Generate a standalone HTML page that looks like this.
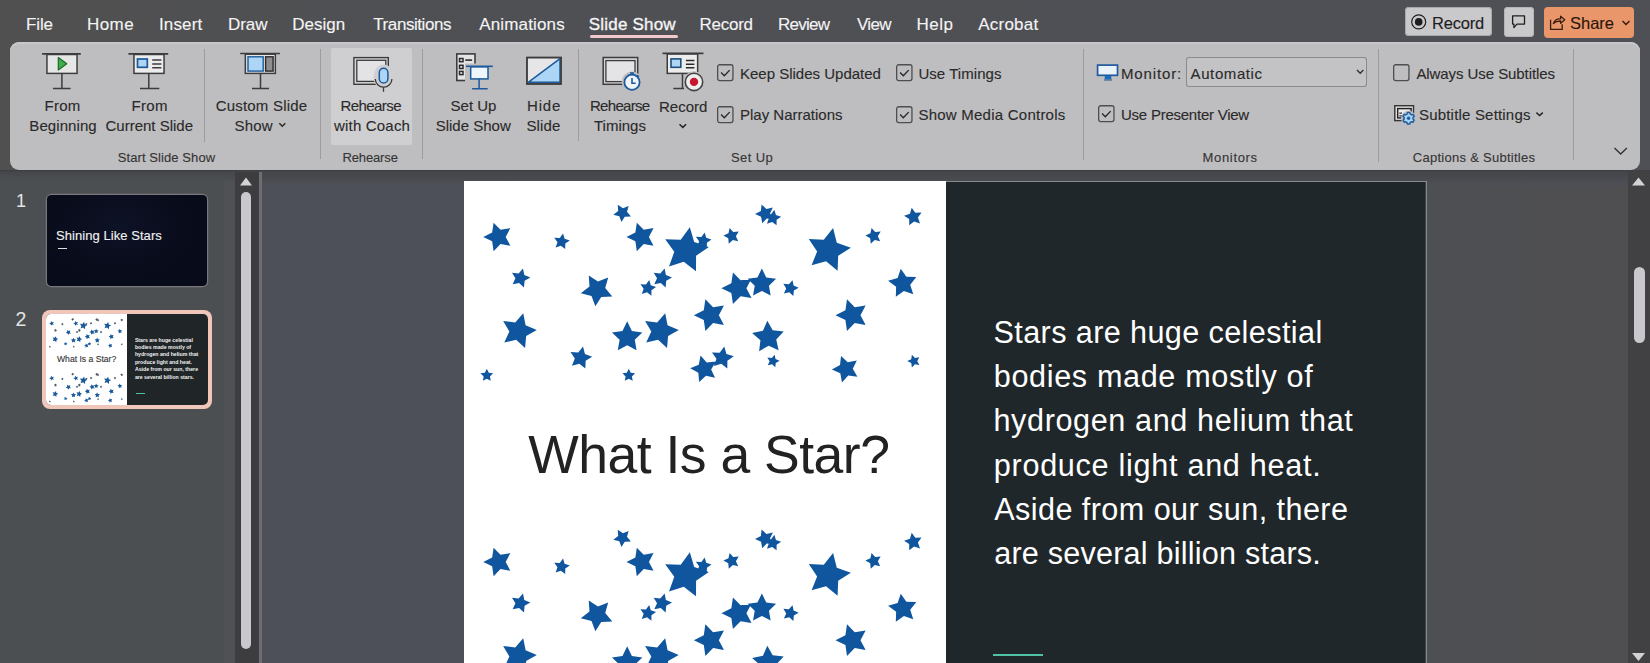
<!DOCTYPE html>
<html><head><meta charset="utf-8"><style>
html,body{margin:0;padding:0;width:1650px;height:663px;overflow:hidden;background:linear-gradient(90deg,#505050 0px,#4f5054 420px,#4f5055 1650px);font-family:"Liberation Sans", sans-serif;}
.t{position:absolute;white-space:nowrap;line-height:1;-webkit-text-stroke:0.12px currentColor;}
</style></head><body>
<div class="t" style="left:26.0px;top:15.6px;font-size:17px;color:#f4f4f4;letter-spacing:-0.13px;">File</div>
<div class="t" style="left:87.0px;top:15.6px;font-size:17px;color:#f4f4f4;letter-spacing:0.43px;">Home</div>
<div class="t" style="left:159.0px;top:15.6px;font-size:17px;color:#f4f4f4;letter-spacing:0.14px;">Insert</div>
<div class="t" style="left:227.9px;top:15.6px;font-size:17px;color:#f4f4f4;">Draw</div>
<div class="t" style="left:292.3px;top:15.6px;font-size:17px;color:#f4f4f4;">Design</div>
<div class="t" style="left:373.3px;top:15.6px;font-size:17px;color:#f4f4f4;letter-spacing:-0.43px;">Transitions</div>
<div class="t" style="left:479.3px;top:15.6px;font-size:17px;color:#f4f4f4;letter-spacing:0.14px;">Animations</div>
<div class="t" style="left:588.8px;top:15.6px;font-size:17px;color:#f4f4f4;-webkit-text-stroke:0.35px #f4f4f4;letter-spacing:0.20px;">Slide Show</div>
<div class="t" style="left:699.6px;top:15.6px;font-size:17px;color:#f4f4f4;letter-spacing:-0.28px;">Record</div>
<div class="t" style="left:778.0px;top:15.6px;font-size:17px;color:#f4f4f4;letter-spacing:-0.74px;">Review</div>
<div class="t" style="left:857.0px;top:15.6px;font-size:17px;color:#f4f4f4;letter-spacing:-0.67px;">View</div>
<div class="t" style="left:916.6px;top:15.6px;font-size:17px;color:#f4f4f4;letter-spacing:0.47px;">Help</div>
<div class="t" style="left:978.2px;top:15.6px;font-size:17px;color:#f4f4f4;letter-spacing:0.23px;">Acrobat</div>
<div style="position:absolute;left:589.5px;top:34.5px;width:88px;height:3px;border-radius:2px;background:#efc9cc"></div>
<div style="position:absolute;left:1405.3px;top:7.3px;width:87px;height:29px;border-radius:4px;background:#c9c9cb;box-shadow:inset 0 0 0 1px #a9a9ac"></div>
<svg style="position:absolute;left:1410px;top:13px" width="18" height="18"><circle cx="8.7" cy="8.9" r="7" fill="none" stroke="#1e1e1e" stroke-width="1.15"/><circle cx="8.7" cy="8.9" r="3.8" fill="#1e1e1e"/></svg>
<div class="t" style="left:1432.0px;top:14.9px;font-size:16.5px;color:#1e1e1e;letter-spacing:-0.20px;">Record</div>
<div style="position:absolute;left:1503.5px;top:7px;width:30px;height:30px;border-radius:4px;background:#c9c9cb;box-shadow:inset 0 0 0 1px #b5b5b8"></div>
<svg style="position:absolute;left:1505px;top:8px" width="30" height="28"><path d="M7.6 7.9 H19.5 V16.1 H11.9 L8.9 19.6 V16.1 H7.6 Z" fill="none" stroke="#1e1e1e" stroke-width="1.3" stroke-linejoin="round"/></svg>
<div style="position:absolute;left:1544px;top:6.5px;width:90px;height:31px;border-radius:4px;background:#e9966b"></div>
<svg style="position:absolute;left:1505px;top:8px" width="65" height="28"><path d="M45.6 11.8 V21.3 H57.2 V16.2" fill="none" stroke="#3a1e0e" stroke-width="1.3"/><path d="M48.3 15.6 C49.5 12.3 52 10.6 55.6 10.9 L55.6 8.2 L59.8 11.7 L55.6 15.3 L55.6 13 C52.6 12.9 50.3 13.7 48.3 15.6 Z" fill="none" stroke="#3a1e0e" stroke-width="1.3" stroke-linejoin="round"/></svg>
<div class="t" style="left:1570.0px;top:14.9px;font-size:16.5px;color:#2a170c;">Share</div>
<svg style="position:absolute;left:1620px;top:18px" width="12" height="10"><path d="M2.5 3 L6 6.5 L9.5 3" fill="none" stroke="#2e1a10" stroke-width="1.4"/></svg>
<div style="position:absolute;left:10px;top:42px;width:1630px;height:128px;border-radius:9px;background:#bebdbf;box-shadow:inset 0 2px 0 #c9c7cb"></div>
<div style="position:absolute;left:204.0px;top:49px;width:1.3px;height:93px;background:#9c9b9e"></div>
<div style="position:absolute;left:320.0px;top:49px;width:1.3px;height:110px;background:#9c9b9e"></div>
<div style="position:absolute;left:422.0px;top:49px;width:1.3px;height:110px;background:#9c9b9e"></div>
<div style="position:absolute;left:578.0px;top:49px;width:1.3px;height:92px;background:#9c9b9e"></div>
<div style="position:absolute;left:1083.0px;top:49px;width:1.3px;height:111px;background:#9c9b9e"></div>
<div style="position:absolute;left:1377.5px;top:49px;width:1.3px;height:113px;background:#9c9b9e"></div>
<div style="position:absolute;left:1572.5px;top:49px;width:1.3px;height:111px;background:#9c9b9e"></div>
<div style="position:absolute;left:331px;top:48px;width:81px;height:97px;background:#cfced1;border-radius:2px"></div>
<div class="t" style="left:117.8px;top:151.0px;font-size:13px;color:#353535;letter-spacing:0.08px;">Start Slide Show</div>
<div class="t" style="left:342.5px;top:151.0px;font-size:13px;color:#353535;letter-spacing:-0.14px;">Rehearse</div>
<div class="t" style="left:731.0px;top:151.3px;font-size:13px;color:#353535;letter-spacing:0.40px;">Set Up</div>
<div class="t" style="left:1202.6px;top:151.2px;font-size:13px;color:#353535;letter-spacing:0.66px;">Monitors</div>
<div class="t" style="left:1412.8px;top:151.2px;font-size:13px;color:#353535;letter-spacing:0.27px;">Captions &amp; Subtitles</div>
<div class="t" style="left:44.5px;top:97.9px;font-size:15px;color:#2a2a2a;letter-spacing:0.27px;">From</div>
<div class="t" style="left:29.3px;top:118.3px;font-size:15px;color:#2a2a2a;letter-spacing:0.08px;">Beginning</div>
<div class="t" style="left:131.4px;top:97.9px;font-size:15px;color:#2a2a2a;letter-spacing:0.40px;">From</div>
<div class="t" style="left:105.5px;top:118.3px;font-size:15px;color:#2a2a2a;">Current Slide</div>
<div class="t" style="left:215.7px;top:97.9px;font-size:15px;color:#2a2a2a;letter-spacing:0.20px;">Custom Slide</div>
<div class="t" style="left:234.6px;top:118.3px;font-size:15px;color:#2a2a2a;letter-spacing:0.13px;">Show</div>
<svg style="position:absolute;left:277px;top:120px" width="12" height="10"><path d="M2.3 3.3 L5.3 6.3 L8.3 3.3" fill="none" stroke="#2a2a2a" stroke-width="1.5"/></svg>
<div class="t" style="left:340.5px;top:97.9px;font-size:15px;color:#2a2a2a;letter-spacing:-0.57px;">Rehearse</div>
<div class="t" style="left:334.0px;top:118.3px;font-size:15px;color:#2a2a2a;letter-spacing:0.19px;">with Coach</div>
<div class="t" style="left:450.6px;top:97.9px;font-size:15px;color:#2a2a2a;">Set Up</div>
<div class="t" style="left:435.7px;top:118.3px;font-size:15px;color:#2a2a2a;">Slide Show</div>
<div class="t" style="left:527.0px;top:97.9px;font-size:15px;color:#2a2a2a;letter-spacing:0.83px;">Hide</div>
<div class="t" style="left:526.5px;top:118.3px;font-size:15px;color:#2a2a2a;letter-spacing:0.12px;">Slide</div>
<div class="t" style="left:590.0px;top:97.9px;font-size:15px;color:#2a2a2a;letter-spacing:-0.71px;">Rehearse</div>
<div class="t" style="left:594.0px;top:118.3px;font-size:15px;color:#2a2a2a;">Timings</div>
<div class="t" style="left:659.0px;top:98.8px;font-size:15px;color:#2a2a2a;">Record</div>
<svg style="position:absolute;left:676.7px;top:121px" width="12" height="10"><path d="M2.5 3.2 L5.8 6.4 L9.1 3.2" fill="none" stroke="#262626" stroke-width="1.5"/></svg>
<svg style="position:absolute;left:716px;top:64px" width="18" height="18"><rect x="1.65" y="0.75" width="15.3" height="15.8" rx="2" fill="none" stroke="#4e4e4e" stroke-width="1.3"/><path d="M5.1 8.6 L8.3 11.7 L13.7 6.1" fill="none" stroke="#262626" stroke-width="1.35"/></svg>
<div class="t" style="left:740.0px;top:66.1px;font-size:15px;color:#2a2a2a;">Keep Slides Updated</div>
<svg style="position:absolute;left:716px;top:105.5px" width="18" height="18"><rect x="1.65" y="0.75" width="15.3" height="15.8" rx="2" fill="none" stroke="#4e4e4e" stroke-width="1.3"/><path d="M5.1 8.6 L8.3 11.7 L13.7 6.1" fill="none" stroke="#262626" stroke-width="1.35"/></svg>
<div class="t" style="left:740.0px;top:107.3px;font-size:15px;color:#2a2a2a;">Play Narrations</div>
<svg style="position:absolute;left:895px;top:64px" width="18" height="18"><rect x="1.65" y="0.75" width="15.3" height="15.8" rx="2" fill="none" stroke="#4e4e4e" stroke-width="1.3"/><path d="M5.1 8.6 L8.3 11.7 L13.7 6.1" fill="none" stroke="#262626" stroke-width="1.35"/></svg>
<div class="t" style="left:918.4px;top:66.1px;font-size:15px;color:#2a2a2a;letter-spacing:0.06px;">Use Timings</div>
<svg style="position:absolute;left:895px;top:105.5px" width="18" height="18"><rect x="1.65" y="0.75" width="15.3" height="15.8" rx="2" fill="none" stroke="#4e4e4e" stroke-width="1.3"/><path d="M5.1 8.6 L8.3 11.7 L13.7 6.1" fill="none" stroke="#262626" stroke-width="1.35"/></svg>
<div class="t" style="left:918.4px;top:107.3px;font-size:15px;color:#2a2a2a;letter-spacing:0.24px;">Show Media Controls</div>
<svg style="position:absolute;left:1097px;top:105px" width="18" height="18"><rect x="1.65" y="0.75" width="15.3" height="15.8" rx="2" fill="none" stroke="#4e4e4e" stroke-width="1.3"/><path d="M5.1 8.6 L8.3 11.7 L13.7 6.1" fill="none" stroke="#262626" stroke-width="1.35"/></svg>
<div class="t" style="left:1121.0px;top:106.7px;font-size:15px;color:#2a2a2a;letter-spacing:-0.24px;">Use Presenter View</div>
<svg style="position:absolute;left:1391.5px;top:64px" width="18" height="18"><rect x="1.65" y="0.75" width="15.3" height="15.8" rx="2" fill="none" stroke="#4e4e4e" stroke-width="1.3"/></svg>
<div class="t" style="left:1416.4px;top:66.0px;font-size:15px;color:#2a2a2a;letter-spacing:-0.07px;">Always Use Subtitles</div>
<svg style="position:absolute;left:1090px;top:58px" width="40" height="30"><rect x="7.6" y="7.1" width="19.9" height="10.2" fill="#eaf2fa" stroke="#1f5a9e" stroke-width="1.7"/><rect x="14.7" y="18" width="6.6" height="3.3" fill="#1a6cc0"/><path d="M14 22 H22" stroke="#1a4a80" stroke-width="0.9"/></svg>
<div class="t" style="left:1121.0px;top:66.0px;font-size:15px;color:#2a2a2a;letter-spacing:0.86px;">Monitor:</div>
<div style="position:absolute;left:1186px;top:57px;width:181px;height:30px;border-radius:3px;background:#c3c2c4;box-shadow:inset 0 0 0 1px #8a898c"></div>
<div class="t" style="left:1190.6px;top:65.6px;font-size:15px;color:#2a2a2a;letter-spacing:0.59px;">Automatic</div>
<svg style="position:absolute;left:1354px;top:67px" width="12" height="10"><path d="M3 3 L6.2 6.2 L9.4 3" fill="none" stroke="#333" stroke-width="1.4"/></svg>
<svg style="position:absolute;left:1388px;top:100px" width="40" height="30"><rect x="6.8" y="5.7" width="18.7" height="14.9" fill="#dcdcdc" stroke="#333" stroke-width="1.4"/><rect x="9.7" y="8.6" width="13.4" height="9.3" fill="#ececec" stroke="#222" stroke-width="1.4"/><path d="M11.3 13.1 H14 M11.3 15.8 H14" stroke="#333" stroke-width="1.2"/><circle cx="20.6" cy="18.3" r="7.6" fill="#bebdbf"/><path d="M25.04,19.00 L26.18,20.22 L25.05,22.17 L23.43,21.80 L22.21,22.50 L21.73,24.09 L19.47,24.09 L18.99,22.50 L17.77,21.80 L16.15,22.17 L15.02,20.22 L16.16,19.00 L16.16,17.60 L15.02,16.38 L16.15,14.43 L17.77,14.80 L18.99,14.10 L19.47,12.51 L21.73,12.51 L22.21,14.10 L23.43,14.80 L25.05,14.43 L26.18,16.38 L25.04,17.60Z" fill="#a9d4f5" stroke="#1f5fa0" stroke-width="1.5" stroke-linejoin="round"/><circle cx="20.6" cy="18.3" r="1.7" fill="#1f5fa0"/></svg>
<div class="t" style="left:1419.0px;top:106.7px;font-size:15px;color:#2a2a2a;letter-spacing:0.19px;">Subtitle Settings</div>
<svg style="position:absolute;left:1534px;top:110px" width="12" height="10"><path d="M2.4 2.6 L5.6 5.6 L8.8 2.6" fill="none" stroke="#262626" stroke-width="1.45"/></svg>
<svg style="position:absolute;left:1612px;top:145px" width="18" height="12"><path d="M2.5 3 L8.7 9 L14.9 3" fill="none" stroke="#333" stroke-width="1.4"/></svg>
<svg style="position:absolute;left:36px;top:48px" width="60" height="45" viewBox="0 0 60 45">
<rect x="10.95" y="6.5" width="30.1" height="18.9" fill="#e6e6e6" stroke="#3c3c3c" stroke-width="1.5"/>
<path d="M6.1 5.9 H44.8" stroke="#3c3c3c" stroke-width="1.6"/>
<path d="M25.9 26 V40.2 M17 40.4 H34.6" stroke="#3c3c3c" stroke-width="1.5"/>
<path d="M22.3 9.6 L30.8 15.8 L22.3 22 Z" fill="#3fae4f" stroke="#1e6a2a" stroke-width="1.2" stroke-linejoin="round"/>
</svg>
<svg style="position:absolute;left:122px;top:48px" width="60" height="45" viewBox="0 0 60 45">
<rect x="11.95" y="6.5" width="30.1" height="18.9" fill="#ececec" stroke="#3c3c3c" stroke-width="1.5"/>
<path d="M6.4 5.9 H46.2" stroke="#3c3c3c" stroke-width="1.6"/>
<path d="M26.8 26 V40.2 M18 40.4 H37.3" stroke="#3c3c3c" stroke-width="1.5"/>
<rect x="15.5" y="11" width="9.8" height="8.3" fill="#acd5f6" stroke="#1d5a9c" stroke-width="1.7"/>
<path d="M30.2 12.1 H39.4 M30.2 16 H39.4 M30.2 19.8 H39.4" stroke="#3c3c3c" stroke-width="1.5"/>
</svg>
<svg style="position:absolute;left:231px;top:48px" width="60" height="45" viewBox="0 0 60 45">
<rect x="14.35" y="6.2" width="30" height="19.2" fill="#e6e6e6" stroke="#3c3c3c" stroke-width="1.5"/>
<path d="M9.2 5.5 H48.9" stroke="#3c3c3c" stroke-width="1.6"/>
<path d="M29.5 26 V40.4 M21 40.6 H38" stroke="#3c3c3c" stroke-width="1.5"/>
<rect x="17" y="8.8" width="15.2" height="14.3" fill="#acd5f6" stroke="#1d5a9c" stroke-width="1.4"/>
<rect x="34.6" y="8.8" width="7.5" height="14.3" fill="#8f8f8f" stroke="#2a2a2a" stroke-width="1.4"/>
</svg>
<svg style="position:absolute;left:340px;top:48px" width="70" height="50" viewBox="0 0 70 50">
<rect x="13.9" y="9.6" width="34.4" height="26.7" fill="#d6d6d8" stroke="#3c3c3c" stroke-width="1.4"/>
<rect x="16.8" y="12.3" width="29" height="21.1" fill="#e3e3e5" stroke="#3c3c3c" stroke-width="1.3"/>
<ellipse cx="43.6" cy="29" rx="10" ry="12.5" fill="#cfced1"/>
<path d="M35.3 30.9 A8.3 8.3 0 0 0 51.9 30.9" fill="none" stroke="#3c3c3c" stroke-width="1.3"/>
<rect x="39.3" y="20.2" width="8.6" height="14.8" rx="4.3" fill="#acd5f6" stroke="#1d5a9c" stroke-width="1.5"/>
<path d="M43.5 39.2 V43.8" stroke="#3c3c3c" stroke-width="1.3"/>
</svg>
<svg style="position:absolute;left:448px;top:48px" width="60" height="45" viewBox="0 0 60 45">
<rect x="8.8" y="5.9" width="18.2" height="26.6" fill="#e4e4e4" stroke="#3c3c3c" stroke-width="1.6"/>
<rect x="11.5" y="10.5" width="3.5" height="3.2" fill="#e4e4e4" stroke="#2a2a2a" stroke-width="1.5"/>
<rect x="11.5" y="17.3" width="3.5" height="3.2" fill="#e4e4e4" stroke="#2a2a2a" stroke-width="1.5"/>
<rect x="11.5" y="23.4" width="3.5" height="3.2" fill="#e4e4e4" stroke="#2a2a2a" stroke-width="1.5"/>
<path d="M17.3 12.1 H24.1" stroke="#2a2a2a" stroke-width="1.6"/>
<rect x="17" y="15.5" width="28" height="26" fill="#bebdbf"/>
<path d="M18 18.3 H44.8" stroke="#1d5a9c" stroke-width="1.6"/>
<rect x="22.7" y="18.9" width="17.3" height="12" fill="#eef5fb" stroke="#1d5a9c" stroke-width="1.5"/>
<path d="M31.1 31 V40.5 M24.1 40.7 H39.7" stroke="#1d5a9c" stroke-width="1.5"/>
</svg>
<svg style="position:absolute;left:515px;top:48px" width="60" height="45" viewBox="0 0 60 45">
<rect x="11.95" y="9.55" width="34.1" height="26.4" fill="#e6e6e8" stroke="#3c3c3c" stroke-width="1.5"/>
<path d="M13.2 34.3 L45 10.6 V34.3 Z" fill="#acd5f6" stroke="#1d5a9c" stroke-width="1.5" stroke-linejoin="round"/>
<rect x="11.95" y="9.55" width="34.1" height="26.4" fill="none" stroke="#3c3c3c" stroke-width="1.5"/>
</svg>
<svg style="position:absolute;left:595px;top:48px" width="60" height="45" viewBox="0 0 60 45">
<rect x="8.2" y="9.5" width="34.5" height="26.8" fill="#d6d6d8" stroke="#3c3c3c" stroke-width="1.5"/>
<rect x="10.9" y="12.6" width="29.1" height="21" fill="#e4e4e6" stroke="#3c3c3c" stroke-width="1.3"/>
<circle cx="37" cy="33.8" r="10.3" fill="#bebdbf"/>
<circle cx="37" cy="34.3" r="7.6" fill="#eef4fa" stroke="#1d5a9c" stroke-width="1.8"/>
<path d="M35 25 H39 M37 25 V26.7 M42.3 27.2 L43.8 28.7" stroke="#1d5a9c" stroke-width="1.6"/>
<path d="M37 30 V35.2 H40.7" fill="none" stroke="#1d5a9c" stroke-width="1.6"/>
</svg>
<svg style="position:absolute;left:655px;top:48px" width="60" height="45" viewBox="0 0 60 45">
<rect x="12.25" y="6" width="30.4" height="19.4" fill="#ececec" stroke="#3c3c3c" stroke-width="1.5"/>
<path d="M7.5 5.4 H48.5" stroke="#3c3c3c" stroke-width="1.6"/>
<path d="M27.5 26 V40.2 M18.3 40.4 H29" stroke="#3c3c3c" stroke-width="1.5"/>
<rect x="16" y="10.9" width="9.8" height="8.4" fill="#acd5f6" stroke="#1f4f7a" stroke-width="1.6"/>
<path d="M30.9 12.4 H39.4 M30.9 16.2 H39.4 M30.9 19.8 H39.4" stroke="#2a2a2a" stroke-width="1.5"/>
<circle cx="39" cy="33.9" r="10.6" fill="#bebdbf"/>
<circle cx="39" cy="33.9" r="8.7" fill="#eeeeee" stroke="#444" stroke-width="1.6"/>
<circle cx="39" cy="33.9" r="4.2" fill="#c8172c"/>
</svg>
<div style="position:absolute;left:0;top:170px;width:1650px;height:16px;background:linear-gradient(#3d3d41 0px,#45464a 2px,#4a4b50 10px,#4e5157 16px)"></div>
<div style="position:absolute;left:0;top:172px;width:236px;height:491px;background:linear-gradient(#46474a 0px,#4c4f52 9px,#4c4f52 100%)"></div>
<div style="position:absolute;left:224px;top:181px;width:11px;height:482px;background:#505155"></div>
<div style="position:absolute;left:235px;top:172px;width:24px;height:491px;background:#3d3d40"></div>
<div style="position:absolute;left:259px;top:172px;width:2.5px;height:491px;background:#6c6e72"></div>
<svg style="position:absolute;left:239px;top:176px" width="14" height="10"><path d="M1 9.5 L7 1.5 L13 9.5 Z" fill="#d2d2d4"/></svg>
<div style="position:absolute;left:240.5px;top:192px;width:10.5px;height:457px;border-radius:5.5px;background:#c9c8cd"></div>
<div style="position:absolute;left:261.5px;top:186px;width:1366px;height:477px;background:linear-gradient(90deg,#4d5058 0px,#4d5059 200px,#4e4f53 1160px,#4f4f51 1366px)"></div>
<div style="position:absolute;left:1628px;top:170px;width:22px;height:493px;background:#414143"></div>
<svg style="position:absolute;left:1631px;top:176px" width="15" height="10"><path d="M1 9.5 L7.5 1.5 L14 9.5 Z" fill="#d2d2d4"/></svg>
<div style="position:absolute;left:1633.5px;top:267px;width:11px;height:76px;border-radius:6px;background:#c9c8cd"></div>
<svg style="position:absolute;left:1631px;top:652px" width="15" height="10"><path d="M1 1 L7.5 9 L14 1 Z" fill="#d2d2d4"/></svg>
<div class="t" style="left:16.0px;top:192.3px;font-size:18px;color:#e4e4e4;-webkit-text-stroke:0;">1</div>
<div style="position:absolute;left:46.7px;top:195.3px;width:160.5px;height:91px;border-radius:4.5px;background:radial-gradient(ellipse 60% 70% at 45% 35%,#0e1226,#080b19 80%);box-shadow:0 0 0 1.2px #77787e"></div>
<div class="t" style="left:56.0px;top:229.0px;font-size:13px;color:#f0f0f0;letter-spacing:0.06px;">Shining Like Stars</div>
<div style="position:absolute;left:57.5px;top:247.5px;width:9px;height:1.3px;background:#ddd"></div>
<div class="t" style="left:15.5px;top:309.7px;font-size:19.5px;color:#e4e4e4;-webkit-text-stroke:0;">2</div>
<div style="position:absolute;left:42px;top:310px;width:169.5px;height:98.5px;border-radius:8px;background:#f0c6bb"></div>
<div style="position:absolute;left:46px;top:313.5px;width:161.5px;height:91.5px;border-radius:5px;background:#202527;overflow:hidden"><div style="position:absolute;left:0;top:0;width:81.2px;height:92px;background:#fff"></div><svg width="82" height="92" style="position:absolute;left:0;top:0"><path d="M4.99,7.02 L6.15,8.22 L7.81,7.93 L7.03,9.42 L7.81,10.90 L6.15,10.62 L4.99,11.82 L4.74,10.16 L3.24,9.42 L4.74,8.68ZM29.11,7.02 L30.28,8.22 L31.93,7.93 L31.15,9.42 L31.93,10.90 L30.28,10.62 L29.11,11.82 L28.87,10.16 L27.37,9.42 L28.87,8.68ZM38.05,7.79 L38.78,10.30 L41.25,11.11 L39.10,12.58 L39.09,15.18 L37.02,13.59 L34.54,14.38 L35.42,11.93 L33.90,9.82 L36.51,9.90ZM62.18,7.93 L62.80,10.38 L65.18,11.26 L63.04,12.61 L62.94,15.14 L60.99,13.52 L58.55,14.21 L59.49,11.86 L58.09,9.75 L60.61,9.92ZM21.02,15.90 L22.57,16.94 L24.29,16.25 L23.79,18.04 L24.98,19.47 L23.12,19.54 L22.13,21.12 L21.48,19.37 L19.68,18.91 L21.14,17.76ZM45.31,15.40 L46.61,16.73 L48.44,16.42 L47.57,18.06 L48.44,19.71 L46.61,19.40 L45.31,20.73 L45.04,18.89 L43.37,18.06 L45.04,17.24ZM50.18,14.74 L50.92,16.24 L52.58,16.48 L51.38,17.65 L51.66,19.30 L50.18,18.52 L48.69,19.30 L48.98,17.65 L47.78,16.48 L49.44,16.24ZM73.58,14.77 L74.52,16.15 L76.20,16.16 L75.17,17.48 L75.68,19.08 L74.11,18.51 L72.75,19.49 L72.80,17.82 L71.45,16.83 L73.05,16.36ZM9.98,22.29 L10.38,24.30 L12.26,25.11 L10.47,26.11 L10.29,28.15 L8.78,26.76 L6.79,27.21 L7.64,25.35 L6.60,23.59 L8.63,23.83ZM20.05,27.89 L20.37,29.15 L21.59,29.60 L20.49,30.30 L20.44,31.60 L19.44,30.77 L18.19,31.12 L18.67,29.91 L17.94,28.83 L19.24,28.91ZM27.49,23.65 L28.28,25.25 L30.05,25.51 L28.77,26.75 L29.07,28.51 L27.49,27.68 L25.91,28.51 L26.21,26.75 L24.93,25.51 L26.70,25.25ZM33.89,22.29 L34.29,24.30 L36.17,25.11 L34.39,26.11 L34.20,28.15 L32.70,26.76 L30.70,27.21 L31.56,25.35 L30.51,23.59 L32.54,23.83ZM40.66,19.94 L41.96,21.27 L43.80,20.95 L42.93,22.60 L43.80,24.25 L41.96,23.93 L40.66,25.27 L40.40,23.42 L38.73,22.60 L40.40,21.78ZM51.10,23.54 L52.01,25.16 L53.86,25.33 L52.60,26.70 L53.01,28.52 L51.32,27.74 L49.72,28.69 L49.94,26.84 L48.54,25.61 L50.36,25.25ZM64.52,19.94 L65.82,21.27 L67.66,20.95 L66.79,22.60 L67.66,24.25 L65.82,23.93 L64.52,25.27 L64.26,23.42 L62.59,22.60 L64.26,21.78ZM39.85,29.40 L40.88,30.58 L42.44,30.39 L41.64,31.74 L42.29,33.16 L40.77,32.81 L39.62,33.87 L39.47,32.32 L38.11,31.55 L39.55,30.93ZM43.84,27.88 L44.21,29.13 L45.45,29.53 L44.37,30.27 L44.36,31.57 L43.33,30.77 L42.09,31.17 L42.53,29.94 L41.77,28.89 L43.07,28.93ZM63.52,29.46 L64.65,30.54 L66.18,30.23 L65.50,31.63 L66.27,32.99 L64.72,32.78 L63.67,33.94 L63.39,32.40 L61.97,31.76 L63.35,31.02ZM4.99,61.77 L6.15,62.97 L7.81,62.68 L7.03,64.17 L7.81,65.65 L6.15,65.37 L4.99,66.57 L4.74,64.91 L3.24,64.17 L4.74,63.43ZM29.11,61.77 L30.28,62.97 L31.93,62.68 L31.15,64.17 L31.93,65.65 L30.28,65.37 L29.11,66.57 L28.87,64.91 L27.37,64.17 L28.87,63.43ZM38.05,62.55 L38.78,65.05 L41.25,65.86 L39.10,67.33 L39.09,69.94 L37.02,68.34 L34.54,69.13 L35.42,66.68 L33.90,64.57 L36.51,64.65ZM62.18,62.68 L62.80,65.13 L65.18,66.01 L63.04,67.36 L62.94,69.89 L60.99,68.27 L58.55,68.96 L59.49,66.61 L58.09,64.50 L60.61,64.67ZM21.02,70.65 L22.57,71.69 L24.29,71.00 L23.79,72.79 L24.98,74.22 L23.12,74.30 L22.13,75.87 L21.48,74.12 L19.68,73.66 L21.14,72.51ZM45.31,70.15 L46.61,71.48 L48.44,71.17 L47.57,72.81 L48.44,74.46 L46.61,74.15 L45.31,75.48 L45.04,73.64 L43.37,72.81 L45.04,71.99ZM50.18,69.49 L50.92,70.99 L52.58,71.23 L51.38,72.40 L51.66,74.05 L50.18,73.28 L48.69,74.05 L48.98,72.40 L47.78,71.23 L49.44,70.99ZM73.58,69.52 L74.52,70.90 L76.20,70.91 L75.17,72.23 L75.68,73.83 L74.11,73.26 L72.75,74.24 L72.80,72.57 L71.45,71.58 L73.05,71.11ZM9.98,77.04 L10.38,79.05 L12.26,79.86 L10.47,80.86 L10.29,82.90 L8.78,81.51 L6.79,81.96 L7.64,80.10 L6.60,78.34 L8.63,78.58ZM20.05,82.64 L20.37,83.90 L21.59,84.35 L20.49,85.05 L20.44,86.35 L19.44,85.52 L18.19,85.87 L18.67,84.66 L17.94,83.58 L19.24,83.66ZM27.49,78.40 L28.28,80.00 L30.05,80.26 L28.77,81.50 L29.07,83.27 L27.49,82.43 L25.91,83.27 L26.21,81.50 L24.93,80.26 L26.70,80.00ZM33.89,77.04 L34.29,79.05 L36.17,79.86 L34.39,80.86 L34.20,82.90 L32.70,81.51 L30.70,81.96 L31.56,80.10 L30.51,78.34 L32.54,78.58ZM40.66,74.69 L41.96,76.02 L43.80,75.70 L42.93,77.35 L43.80,79.00 L41.96,78.68 L40.66,80.02 L40.40,78.18 L38.73,77.35 L40.40,76.53ZM51.10,78.29 L52.01,79.91 L53.86,80.08 L52.60,81.45 L53.01,83.27 L51.32,82.49 L49.72,83.44 L49.94,81.59 L48.54,80.36 L50.36,80.00ZM64.52,74.69 L65.82,76.02 L67.66,75.70 L66.79,77.35 L67.66,79.00 L65.82,78.68 L64.52,80.02 L64.26,78.18 L62.59,77.35 L64.26,76.53ZM39.85,84.15 L40.88,85.33 L42.44,85.14 L41.64,86.49 L42.29,87.91 L40.77,87.56 L39.62,88.62 L39.47,87.07 L38.11,86.30 L39.55,85.69ZM43.84,82.63 L44.21,83.88 L45.45,84.29 L44.37,85.02 L44.36,86.32 L43.33,85.52 L42.09,85.92 L42.53,84.69 L41.77,83.64 L43.07,83.68ZM63.52,84.21 L64.65,85.30 L66.18,84.98 L65.50,86.39 L66.27,87.74 L64.72,87.53 L63.67,88.69 L63.39,87.15 L61.97,86.51 L63.35,85.77Z" fill="#1a5a9a"/><path d="M16.68,8.84 L16.94,9.73 L17.83,10.02 L17.06,10.55 L17.06,11.48 L16.32,10.91 L15.43,11.19 L15.75,10.31 L15.20,9.56 L16.13,9.59ZM25.90,4.00 L26.77,4.58 L27.74,4.19 L27.46,5.20 L28.12,6.00 L27.08,6.04 L26.53,6.92 L26.16,5.94 L25.15,5.69 L25.97,5.04ZM40.54,8.68 L40.81,9.57 L41.69,9.86 L40.92,10.39 L40.92,11.32 L40.18,10.75 L39.29,11.03 L39.61,10.15 L39.06,9.40 L39.99,9.43ZM44.74,7.90 L45.36,8.60 L46.28,8.49 L45.81,9.29 L46.19,10.14 L45.29,9.93 L44.60,10.56 L44.52,9.64 L43.71,9.18 L44.56,8.82ZM50.14,3.94 L50.94,4.71 L52.04,4.48 L51.55,5.49 L52.10,6.46 L51.00,6.31 L50.25,7.14 L50.05,6.04 L49.03,5.58 L50.01,5.05ZM52.29,4.83 L52.55,5.73 L53.43,6.02 L52.66,6.54 L52.66,7.47 L51.92,6.90 L51.04,7.19 L51.35,6.31 L50.81,5.56 L51.74,5.58ZM68.66,7.90 L69.27,8.60 L70.19,8.49 L69.72,9.29 L70.11,10.14 L69.20,9.93 L68.52,10.56 L68.43,9.64 L67.62,9.18 L68.47,8.82ZM75.42,4.51 L76.04,5.35 L77.08,5.32 L76.47,6.16 L76.82,7.14 L75.83,6.83 L75.00,7.46 L75.00,6.42 L74.14,5.84 L75.13,5.51ZM9.94,14.73 L10.15,15.83 L11.18,16.27 L10.21,16.81 L10.10,17.93 L9.28,17.17 L8.19,17.41 L8.66,16.40 L8.09,15.44 L9.20,15.57ZM31.20,16.68 L31.46,17.58 L32.35,17.87 L31.58,18.39 L31.57,19.32 L30.84,18.75 L29.95,19.04 L30.27,18.16 L29.72,17.41 L30.65,17.43ZM33.80,14.73 L34.02,15.83 L35.04,16.27 L34.07,16.81 L33.96,17.93 L33.14,17.17 L32.06,17.41 L32.52,16.40 L31.95,15.44 L33.06,15.57ZM55.34,16.71 L55.53,17.62 L56.38,17.99 L55.57,18.45 L55.48,19.37 L54.80,18.74 L53.89,18.95 L54.28,18.10 L53.81,17.30 L54.73,17.41ZM3.84,31.62 L4.17,32.29 L4.91,32.40 L4.38,32.92 L4.50,33.65 L3.84,33.30 L3.18,33.65 L3.31,32.92 L2.78,32.40 L3.51,32.29ZM27.76,31.62 L28.09,32.29 L28.82,32.40 L28.29,32.92 L28.42,33.65 L27.76,33.30 L27.10,33.65 L27.22,32.92 L26.69,32.40 L27.43,32.29ZM52.33,29.26 L52.48,29.99 L53.16,30.28 L52.51,30.65 L52.45,31.39 L51.90,30.88 L51.17,31.05 L51.48,30.37 L51.10,29.73 L51.84,29.82ZM75.45,29.27 L75.97,29.81 L76.71,29.68 L76.36,30.34 L76.71,31.00 L75.97,30.87 L75.45,31.41 L75.35,30.67 L74.68,30.34 L75.35,30.01ZM16.68,63.59 L16.94,64.48 L17.83,64.77 L17.06,65.30 L17.06,66.23 L16.32,65.66 L15.43,65.94 L15.75,65.07 L15.20,64.31 L16.13,64.34ZM25.90,58.75 L26.77,59.33 L27.74,58.94 L27.46,59.95 L28.12,60.75 L27.08,60.79 L26.53,61.67 L26.16,60.69 L25.15,60.44 L25.97,59.79ZM40.54,63.43 L40.81,64.32 L41.69,64.61 L40.92,65.14 L40.92,66.07 L40.18,65.50 L39.29,65.78 L39.61,64.91 L39.06,64.15 L39.99,64.18ZM44.74,62.65 L45.36,63.35 L46.28,63.24 L45.81,64.04 L46.19,64.89 L45.29,64.68 L44.60,65.32 L44.52,64.39 L43.71,63.93 L44.56,63.57ZM50.14,58.69 L50.94,59.46 L52.04,59.24 L51.55,60.24 L52.10,61.21 L51.00,61.06 L50.25,61.89 L50.05,60.79 L49.03,60.33 L50.01,59.80ZM52.29,59.58 L52.55,60.48 L53.43,60.77 L52.66,61.29 L52.66,62.22 L51.92,61.65 L51.04,61.94 L51.35,61.06 L50.81,60.31 L51.74,60.33ZM68.66,62.65 L69.27,63.35 L70.19,63.24 L69.72,64.04 L70.11,64.89 L69.20,64.68 L68.52,65.32 L68.43,64.39 L67.62,63.93 L68.47,63.57ZM75.42,59.26 L76.04,60.10 L77.08,60.07 L76.47,60.91 L76.82,61.89 L75.83,61.58 L75.00,62.21 L75.00,61.17 L74.14,60.59 L75.13,60.26ZM9.94,69.48 L10.15,70.58 L11.18,71.02 L10.21,71.56 L10.10,72.68 L9.28,71.92 L8.19,72.16 L8.66,71.15 L8.09,70.19 L9.20,70.32ZM31.20,71.43 L31.46,72.33 L32.35,72.62 L31.58,73.14 L31.57,74.07 L30.84,73.50 L29.95,73.79 L30.27,72.91 L29.72,72.16 L30.65,72.19ZM33.80,69.48 L34.02,70.58 L35.04,71.02 L34.07,71.56 L33.96,72.68 L33.14,71.92 L32.06,72.16 L32.52,71.15 L31.95,70.19 L33.06,70.32ZM55.34,71.46 L55.53,72.37 L56.38,72.74 L55.57,73.20 L55.48,74.12 L54.80,73.49 L53.89,73.70 L54.28,72.85 L53.81,72.05 L54.73,72.16ZM3.84,86.37 L4.17,87.04 L4.91,87.15 L4.38,87.67 L4.50,88.40 L3.84,88.05 L3.18,88.40 L3.31,87.67 L2.78,87.15 L3.51,87.04ZM27.76,86.37 L28.09,87.04 L28.82,87.15 L28.29,87.67 L28.42,88.40 L27.76,88.05 L27.10,88.40 L27.22,87.67 L26.69,87.15 L27.43,87.04ZM52.33,84.01 L52.48,84.74 L53.16,85.03 L52.51,85.40 L52.45,86.14 L51.90,85.63 L51.17,85.80 L51.48,85.12 L51.10,84.48 L51.84,84.57ZM75.45,84.03 L75.97,84.56 L76.71,84.43 L76.36,85.09 L76.71,85.75 L75.97,85.63 L75.45,86.16 L75.35,85.42 L74.68,85.09 L75.35,84.76Z" fill="#4a5666"/></svg><div class="t" style="left:11.0px;top:41.6px;font-size:8.6px;color:#333;">What Is a Star?</div>
<div class="t" style="left:88.9px;top:24.0px;font-size:5.2px;color:#f2f2f2;-webkit-text-stroke:0;font-weight:bold;">Stars are huge celestial</div>
<div class="t" style="left:88.9px;top:31.4px;font-size:5.2px;color:#f2f2f2;-webkit-text-stroke:0;font-weight:bold;">bodies made mostly of</div>
<div class="t" style="left:88.9px;top:38.8px;font-size:5.2px;color:#f2f2f2;-webkit-text-stroke:0;font-weight:bold;">hydrogen and helium that</div>
<div class="t" style="left:88.9px;top:46.2px;font-size:5.2px;color:#f2f2f2;-webkit-text-stroke:0;font-weight:bold;">produce light and heat.</div>
<div class="t" style="left:88.9px;top:53.6px;font-size:5.2px;color:#f2f2f2;-webkit-text-stroke:0;font-weight:bold;">Aside from our sun, there</div>
<div class="t" style="left:88.9px;top:61.0px;font-size:5.2px;color:#f2f2f2;-webkit-text-stroke:0;font-weight:bold;">are several billion stars.</div>
<div style="position:absolute;left:90px;top:79.2px;width:8.5px;height:1.2px;background:#4bbfa0"></div></div>
<div style="position:absolute;left:464px;top:181px;width:482px;height:482px;background:#ffffff;overflow:hidden"><svg width="482" height="482" style="position:absolute;left:0;top:0"><path d="M29.59,41.66 L36.53,48.78 L46.33,47.09 L41.71,55.89 L46.33,64.69 L36.53,63.01 L29.59,70.13 L28.16,60.29 L19.25,55.89 L28.16,51.49ZM99.04,52.46 L100.58,57.76 L105.83,59.49 L101.26,62.60 L101.24,68.12 L96.87,64.74 L91.61,66.43 L93.47,61.23 L90.25,56.74 L95.77,56.91ZM153.77,23.75 L158.92,27.18 L164.66,24.89 L162.98,30.85 L166.94,35.60 L160.76,35.85 L157.45,41.08 L155.31,35.28 L149.32,33.75 L154.17,29.92ZM172.81,41.66 L179.75,48.78 L189.55,47.09 L184.93,55.89 L189.55,64.69 L179.75,63.01 L172.81,70.13 L171.38,60.29 L162.47,55.89 L171.38,51.49ZM225.84,46.27 L230.18,61.11 L244.86,65.96 L232.08,74.67 L232.01,90.13 L219.78,80.67 L205.05,85.38 L210.27,70.82 L201.24,58.27 L216.70,58.74ZM240.67,51.51 L242.22,56.81 L247.46,58.54 L242.90,61.65 L242.87,67.17 L238.50,63.79 L233.24,65.47 L235.11,60.28 L231.88,55.79 L237.40,55.96ZM265.59,46.91 L269.23,51.06 L274.72,50.41 L271.90,55.16 L274.21,60.18 L268.82,58.96 L264.76,62.71 L264.26,57.21 L259.44,54.51 L264.51,52.33ZM297.60,23.39 L302.39,27.97 L308.88,26.62 L306.00,32.59 L309.29,38.35 L302.72,37.45 L298.26,42.36 L297.08,35.84 L291.04,33.11 L296.88,29.97ZM310.38,28.69 L311.93,33.99 L317.17,35.73 L312.61,38.84 L312.58,44.36 L308.21,40.98 L302.95,42.66 L304.82,37.46 L301.59,32.98 L307.11,33.15ZM369.09,47.07 L372.79,61.63 L386.88,66.84 L374.18,74.86 L373.59,89.87 L362.03,80.27 L347.57,84.34 L353.14,70.39 L344.79,57.89 L359.78,58.87ZM407.54,46.91 L411.19,51.06 L416.67,50.41 L413.85,55.16 L416.16,60.18 L410.77,58.96 L406.72,62.71 L406.21,57.21 L401.39,54.51 L406.46,52.33ZM447.69,26.76 L451.34,31.75 L457.53,31.56 L453.92,36.58 L456.00,42.40 L450.11,40.52 L445.22,44.31 L445.19,38.12 L440.08,34.64 L445.95,32.70ZM58.98,87.45 L60.28,93.95 L66.37,96.56 L60.59,99.80 L59.98,106.40 L55.11,101.91 L48.64,103.37 L51.42,97.35 L48.03,91.65 L54.61,92.43ZM124.76,94.40 L133.95,100.54 L144.21,96.45 L141.22,107.08 L148.28,115.58 L137.24,116.01 L131.34,125.35 L127.51,114.99 L116.81,112.27 L125.48,105.43ZM185.22,99.03 L186.77,104.34 L192.01,106.07 L187.45,109.18 L187.42,114.70 L183.05,111.32 L177.79,113.00 L179.66,107.80 L176.43,103.32 L181.95,103.49ZM200.62,87.45 L201.91,93.95 L208.00,96.56 L202.22,99.80 L201.61,106.40 L196.74,101.91 L190.28,103.37 L193.05,97.35 L189.66,91.65 L196.25,92.43ZM268.94,91.40 L276.65,99.32 L287.54,97.45 L282.40,107.23 L287.54,117.00 L276.65,115.14 L268.94,123.05 L267.35,112.11 L257.45,107.23 L267.35,102.34ZM297.85,87.50 L302.25,96.42 L312.08,97.85 L304.96,104.79 L306.65,114.58 L297.85,109.96 L289.05,114.58 L290.73,104.79 L283.61,97.85 L293.45,96.42ZM328.52,99.19 L329.59,104.61 L334.67,106.79 L329.85,109.49 L329.34,114.99 L325.29,111.24 L319.90,112.46 L322.21,107.44 L319.39,102.70 L324.87,103.34ZM436.76,87.65 L442.36,95.86 L452.30,95.91 L446.22,103.77 L449.25,113.24 L439.89,109.89 L431.82,115.69 L432.12,105.75 L424.10,99.87 L433.65,97.09ZM59.24,132.33 L61.61,144.24 L72.77,149.04 L62.17,154.98 L61.06,167.08 L52.13,158.84 L40.28,161.52 L45.36,150.48 L39.15,140.04 L51.22,141.46ZM119.02,165.54 L120.93,173.04 L128.18,175.72 L121.65,179.85 L121.34,187.57 L115.39,182.63 L107.95,184.73 L110.81,177.54 L106.52,171.11 L114.24,171.62ZM163.18,140.37 L167.87,149.88 L178.37,151.40 L170.78,158.81 L172.57,169.26 L163.18,164.32 L153.79,169.26 L155.59,158.81 L147.99,151.40 L158.49,149.88ZM201.19,132.33 L203.56,144.24 L214.72,149.04 L204.12,154.98 L203.01,167.08 L194.08,158.84 L182.23,161.52 L187.31,150.48 L181.10,140.04 L193.17,141.46ZM241.37,118.34 L249.08,126.25 L259.97,124.38 L254.83,134.16 L259.97,143.94 L249.08,142.07 L241.37,149.98 L239.79,139.05 L229.88,134.16 L239.79,129.27ZM303.31,139.73 L308.71,149.36 L319.71,150.38 L312.22,158.49 L314.65,169.27 L304.62,164.64 L295.12,170.29 L296.42,159.32 L288.11,152.03 L298.95,149.87ZM383.01,118.34 L390.72,126.25 L401.61,124.38 L396.47,134.16 L401.61,143.94 L390.72,142.07 L383.01,149.98 L381.42,139.05 L371.51,134.16 L381.42,129.27ZM22.81,187.71 L24.77,191.67 L29.14,192.31 L25.98,195.39 L26.72,199.74 L22.81,197.69 L18.90,199.74 L19.65,195.39 L16.49,192.31 L20.86,191.67ZM164.77,187.71 L166.72,191.67 L171.09,192.31 L167.93,195.39 L168.68,199.74 L164.77,197.69 L160.85,199.74 L161.60,195.39 L158.44,192.31 L162.81,191.67ZM236.56,174.53 L242.68,181.50 L251.90,180.41 L247.15,188.39 L251.04,196.82 L241.99,194.77 L235.17,201.07 L234.32,191.83 L226.22,187.29 L234.75,183.63ZM260.26,165.47 L262.43,172.89 L269.77,175.31 L263.38,179.67 L263.34,187.40 L257.23,182.67 L249.86,185.02 L252.47,177.74 L247.96,171.47 L255.69,171.70ZM310.66,173.68 L311.52,178.01 L315.58,179.75 L311.73,181.91 L311.32,186.31 L308.07,183.32 L303.76,184.29 L305.61,180.28 L303.35,176.48 L307.74,177.00ZM377.03,174.89 L383.74,181.31 L392.82,179.42 L388.79,187.78 L393.40,195.84 L384.20,194.59 L377.96,201.46 L376.31,192.33 L367.85,188.51 L376.02,184.12ZM447.88,173.77 L450.96,176.94 L455.32,176.19 L453.26,180.10 L455.32,184.01 L450.96,183.27 L447.88,186.43 L447.25,182.06 L443.28,180.10 L447.25,178.15ZM29.59,366.66 L36.53,373.78 L46.33,372.09 L41.71,380.89 L46.33,389.69 L36.53,388.01 L29.59,395.13 L28.16,385.29 L19.25,380.89 L28.16,376.49ZM99.04,377.46 L100.58,382.76 L105.83,384.49 L101.26,387.60 L101.24,393.12 L96.87,389.74 L91.61,391.43 L93.47,386.23 L90.25,381.74 L95.77,381.91ZM153.77,348.75 L158.92,352.18 L164.66,349.89 L162.98,355.85 L166.94,360.60 L160.76,360.85 L157.45,366.08 L155.31,360.28 L149.32,358.75 L154.17,354.92ZM172.81,366.66 L179.75,373.78 L189.55,372.09 L184.93,380.89 L189.55,389.69 L179.75,388.01 L172.81,395.13 L171.38,385.29 L162.47,380.89 L171.38,376.49ZM225.84,371.27 L230.18,386.11 L244.86,390.96 L232.08,399.67 L232.01,415.13 L219.78,405.67 L205.05,410.38 L210.27,395.82 L201.24,383.27 L216.70,383.74ZM240.67,376.51 L242.22,381.81 L247.46,383.54 L242.90,386.65 L242.87,392.17 L238.50,388.79 L233.24,390.47 L235.11,385.28 L231.88,380.79 L237.40,380.96ZM265.59,371.91 L269.23,376.06 L274.72,375.41 L271.90,380.16 L274.21,385.18 L268.82,383.96 L264.76,387.71 L264.26,382.21 L259.44,379.51 L264.51,377.33ZM297.60,348.39 L302.39,352.97 L308.88,351.62 L306.00,357.59 L309.29,363.35 L302.72,362.45 L298.26,367.36 L297.08,360.84 L291.04,358.11 L296.88,354.97ZM310.38,353.69 L311.93,358.99 L317.17,360.73 L312.61,363.84 L312.58,369.36 L308.21,365.98 L302.95,367.66 L304.82,362.46 L301.59,357.98 L307.11,358.15ZM369.09,372.07 L372.79,386.63 L386.88,391.84 L374.18,399.86 L373.59,414.87 L362.03,405.27 L347.57,409.34 L353.14,395.39 L344.79,382.89 L359.78,383.87ZM407.54,371.91 L411.19,376.06 L416.67,375.41 L413.85,380.16 L416.16,385.18 L410.77,383.96 L406.72,387.71 L406.21,382.21 L401.39,379.51 L406.46,377.33ZM447.69,351.76 L451.34,356.75 L457.53,356.56 L453.92,361.58 L456.00,367.40 L450.11,365.52 L445.22,369.31 L445.19,363.12 L440.08,359.64 L445.95,357.70ZM58.98,412.45 L60.28,418.95 L66.37,421.56 L60.59,424.80 L59.98,431.40 L55.11,426.91 L48.64,428.37 L51.42,422.35 L48.03,416.65 L54.61,417.43ZM124.76,419.40 L133.95,425.54 L144.21,421.45 L141.22,432.08 L148.28,440.58 L137.24,441.01 L131.34,450.35 L127.51,439.99 L116.81,437.27 L125.48,430.43ZM185.22,424.03 L186.77,429.34 L192.01,431.07 L187.45,434.18 L187.42,439.70 L183.05,436.32 L177.79,438.00 L179.66,432.80 L176.43,428.32 L181.95,428.49ZM200.62,412.45 L201.91,418.95 L208.00,421.56 L202.22,424.80 L201.61,431.40 L196.74,426.91 L190.28,428.37 L193.05,422.35 L189.66,416.65 L196.25,417.43ZM268.94,416.40 L276.65,424.32 L287.54,422.45 L282.40,432.23 L287.54,442.00 L276.65,440.14 L268.94,448.05 L267.35,437.11 L257.45,432.23 L267.35,427.34ZM297.85,412.50 L302.25,421.42 L312.08,422.85 L304.96,429.79 L306.65,439.58 L297.85,434.96 L289.05,439.58 L290.73,429.79 L283.61,422.85 L293.45,421.42ZM328.52,424.19 L329.59,429.61 L334.67,431.79 L329.85,434.49 L329.34,439.99 L325.29,436.24 L319.90,437.46 L322.21,432.44 L319.39,427.70 L324.87,428.34ZM436.76,412.65 L442.36,420.86 L452.30,420.91 L446.22,428.77 L449.25,438.24 L439.89,434.89 L431.82,440.69 L432.12,430.75 L424.10,424.87 L433.65,422.09ZM59.24,457.33 L61.61,469.24 L72.77,474.04 L62.17,479.98 L61.06,492.08 L52.13,483.84 L40.28,486.52 L45.36,475.48 L39.15,465.04 L51.22,466.46ZM119.02,490.54 L120.93,498.04 L128.18,500.72 L121.65,504.85 L121.34,512.57 L115.39,507.63 L107.95,509.73 L110.81,502.54 L106.52,496.11 L114.24,496.62ZM163.18,465.37 L167.87,474.88 L178.37,476.40 L170.78,483.81 L172.57,494.26 L163.18,489.32 L153.79,494.26 L155.59,483.81 L147.99,476.40 L158.49,474.88ZM201.19,457.33 L203.56,469.24 L214.72,474.04 L204.12,479.98 L203.01,492.08 L194.08,483.84 L182.23,486.52 L187.31,475.48 L181.10,465.04 L193.17,466.46ZM241.37,443.34 L249.08,451.25 L259.97,449.38 L254.83,459.16 L259.97,468.94 L249.08,467.07 L241.37,474.98 L239.79,464.05 L229.88,459.16 L239.79,454.27ZM303.31,464.73 L308.71,474.36 L319.71,475.38 L312.22,483.49 L314.65,494.27 L304.62,489.64 L295.12,495.29 L296.42,484.32 L288.11,477.03 L298.95,474.87ZM383.01,443.34 L390.72,451.25 L401.61,449.38 L396.47,459.16 L401.61,468.94 L390.72,467.07 L383.01,474.98 L381.42,464.05 L371.51,459.16 L381.42,454.27ZM22.81,512.71 L24.77,516.67 L29.14,517.31 L25.98,520.39 L26.72,524.74 L22.81,522.69 L18.90,524.74 L19.65,520.39 L16.49,517.31 L20.86,516.67ZM164.77,512.71 L166.72,516.67 L171.09,517.31 L167.93,520.39 L168.68,524.74 L164.77,522.69 L160.85,524.74 L161.60,520.39 L158.44,517.31 L162.81,516.67ZM236.56,499.53 L242.68,506.50 L251.90,505.41 L247.15,513.39 L251.04,521.82 L241.99,519.77 L235.17,526.07 L234.32,516.83 L226.22,512.29 L234.75,508.63ZM260.26,490.47 L262.43,497.89 L269.77,500.31 L263.38,504.67 L263.34,512.40 L257.23,507.67 L249.86,510.02 L252.47,502.74 L247.96,496.47 L255.69,496.70ZM310.66,498.68 L311.52,503.01 L315.58,504.75 L311.73,506.91 L311.32,511.31 L308.07,508.32 L303.76,509.29 L305.61,505.28 L303.35,501.48 L307.74,502.00ZM377.03,499.89 L383.74,506.31 L392.82,504.42 L388.79,512.78 L393.40,520.84 L384.20,519.59 L377.96,526.46 L376.31,517.33 L367.85,513.51 L376.02,509.12ZM447.88,498.77 L450.96,501.94 L455.32,501.19 L453.26,505.10 L455.32,509.01 L450.96,508.27 L447.88,511.43 L447.25,507.06 L443.28,505.10 L447.25,503.15Z" fill="#10569f"/></svg></div>
<div style="position:absolute;left:945.5px;top:181px;width:481px;height:482px;background:#20272a;box-shadow:inset -1.3px 1px 0 #858a8b"></div>
<div class="t" style="left:528.2px;top:428.3px;font-size:53.5px;color:#222222;-webkit-text-stroke:0;letter-spacing:-0.50px;">What Is a Star?</div>
<div class="t" style="left:993.5px;top:316.9px;font-size:30.6px;color:#ffffff;-webkit-text-stroke:0;letter-spacing:0.39px;">Stars are huge celestial</div>
<div class="t" style="left:993.8px;top:361.1px;font-size:30.6px;color:#ffffff;-webkit-text-stroke:0;letter-spacing:0.64px;">bodies made mostly of</div>
<div class="t" style="left:993.5px;top:405.3px;font-size:30.6px;color:#ffffff;-webkit-text-stroke:0;letter-spacing:0.61px;">hydrogen and helium that</div>
<div class="t" style="left:993.8px;top:449.5px;font-size:30.6px;color:#ffffff;-webkit-text-stroke:0;letter-spacing:0.71px;">produce light and heat.</div>
<div class="t" style="left:994.2px;top:493.7px;font-size:30.6px;color:#ffffff;-webkit-text-stroke:0;letter-spacing:0.43px;">Aside from our sun, there</div>
<div class="t" style="left:994.2px;top:537.9px;font-size:30.6px;color:#ffffff;-webkit-text-stroke:0;letter-spacing:0.21px;">are several billion stars.</div>
<div style="position:absolute;left:993px;top:654px;width:50px;height:2.2px;background:#52c2a6"></div>

</body></html>
